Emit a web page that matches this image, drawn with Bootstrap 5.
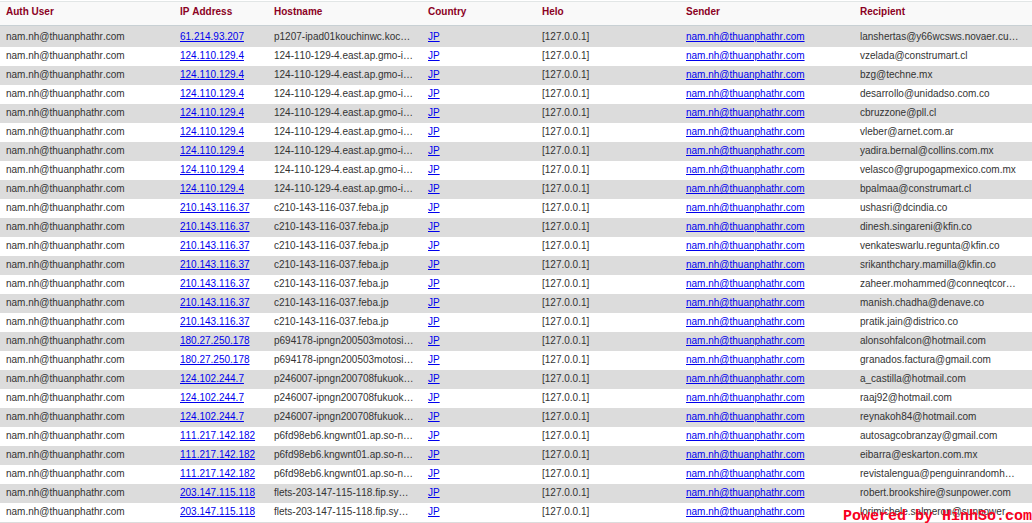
<!DOCTYPE html>
<html lang="en">
<head>
<meta charset="utf-8">
<title>Mail log</title>
<link href="https://cdn.jsdelivr.net/npm/bootstrap@5.3.0/dist/css/bootstrap.min.css" rel="stylesheet">
<style>
html,body{height:523px;overflow:hidden;background:#fff}
body{font-family:"Liberation Sans",Arial,sans-serif;font-size:10px;color:#333;position:relative}
.logtbl{table-layout:fixed;width:1032px;margin:1px 0 0;border-collapse:separate;border-spacing:0;font-size:10px;font-kerning:none;border-top:1px solid #e2e6e6;border-bottom:1px solid #dcdcdc}
.logtbl th{height:24px;padding:0 6px 5px;background:#f9f9f9;color:#8b0023;font-weight:700;border-bottom:1px solid #c8d0d4;vertical-align:middle;box-shadow:none}
.logtbl td{height:19px;padding:0 8px 2px 6px;line-height:17px;white-space:nowrap;overflow:hidden;text-overflow:ellipsis;color:#333;border:0;box-shadow:none;background:#fff;vertical-align:top}
.logtbl td:last-child{padding-right:12px}
.logtbl tbody tr:first-child td{height:21px;padding-top:2px}
.logtbl tbody tr:nth-child(odd) td{background:#dcdcdc}
.logtbl a{color:#0000ee}
.wmark{position:absolute;right:0;bottom:-2px;font-family:"Liberation Mono",monospace;font-weight:700;font-size:15px;line-height:17px;color:#f8001e;white-space:nowrap}
</style>
</head>
<body>
<table class="logtbl">
<colgroup><col style="width:174px"><col style="width:94px"><col style="width:154px"><col style="width:114px"><col style="width:144px"><col style="width:174px"><col style="width:178px"></colgroup>
<thead><tr><th>Auth User</th><th>IP Address</th><th>Hostname</th><th>Country</th><th>Helo</th><th>Sender</th><th>Recipient</th></tr></thead>
<tbody id="rows"></tbody>
</table>
<div class="wmark">Powered by HinhSo.com</div>
<script>
const a='124.110.129.4',ah='124-110-129-4.east.ap.gmo-isp.jp',b='210.143.116.37',bh='c210-143-116-037.feba.jp',c='180.27.250.178',ch='p694178-ipngn200503motosinmiya.jp',d='124.102.244.7',dh='p246007-ipngn200708fukuokachuo.jp',e='111.217.142.182',eh='p6fd98eb6.kngwnt01.ap.so-net.ne.jp',f='203.147.115.118',fh='flets-203-147-115-118.fip.synapse.jp';
const data=[['61.214.93.207','p1207-ipad01kouchinwc.kochi.ocn.ne.jp','lanshertas@y66wcsws.novaer.cu.ma'],
[a,ah,'vzelada@construmart.cl'],[a,ah,'bzg@techne.mx'],[a,ah,'desarrollo@unidadso.com.co'],[a,ah,'cbruzzone@pll.cl'],[a,ah,'vleber@arnet.com.ar'],[a,ah,'yadira.bernal@collins.com.mx'],[a,ah,'velasco@grupogapmexico.com.mx'],[a,ah,'bpalmaa@construmart.cl'],
[b,bh,'ushasri@dcindia.co'],[b,bh,'dinesh.singareni@kfin.co'],[b,bh,'venkateswarlu.regunta@kfin.co'],[b,bh,'srikanthchary.mamilla@kfin.co'],[b,bh,'zaheer.mohammed@conneqtcorp.com'],[b,bh,'manish.chadha@denave.co'],[b,bh,'pratik.jain@districo.co'],
[c,ch,'alonsohfalcon@hotmail.com'],[c,ch,'granados.factura@gmail.com'],
[d,dh,'a_castilla@hotmail.com'],[d,dh,'raaj92@hotmail.com'],[d,dh,'reynakoh84@hotmail.com'],
[e,eh,'autosagcobranzay@gmail.com'],[e,eh,'eibarra@eskarton.com.mx'],[e,eh,'revistalengua@penguinrandomhouse.com'],
[f,fh,'robert.brookshire@sunpower.com'],[f,fh,'lorimichele.salmeron@sunpower.com']];
document.getElementById('rows').innerHTML=data.map(r=>`<tr><td>nam.nh@thuanphathr.com</td><td><a href="#">${r[0]}</a></td><td>${r[1]}</td><td><a href="#">JP</a></td><td>[127.0.0.1]</td><td><a href="#">nam.nh@thuanphathr.com</a></td><td>${r[2]}</td></tr>`).join('');
</script>
<script src="https://cdn.jsdelivr.net/npm/bootstrap@5.3.0/dist/js/bootstrap.bundle.min.js"></script>
</body>
</html>
